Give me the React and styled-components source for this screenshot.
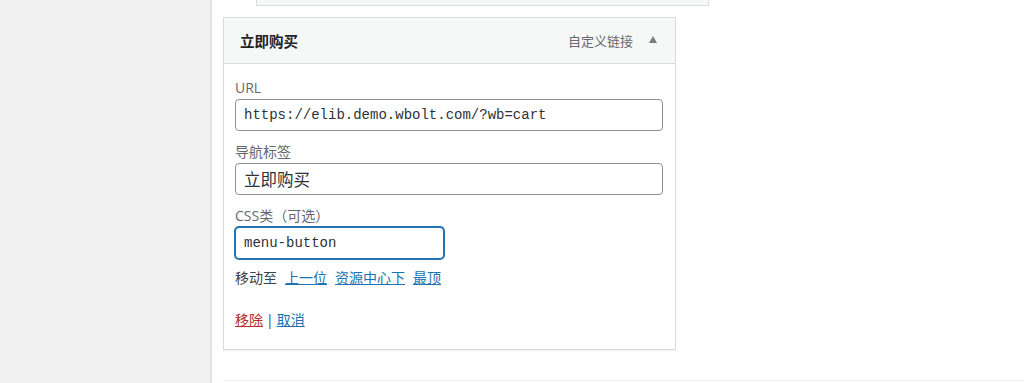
import styled, { createGlobalStyle } from "styled-components";

const GlobalStyle = createGlobalStyle`
  body {
    margin: 0;
    background: #fff;
    font-family: "Open Sans", "Noto Sans CJK SC", sans-serif;
    color: #3c434a;
  }
`;

const Page = styled.div`
  display: flex;
  width: 1024px;
  height: 383px;
  overflow: hidden;
`;

const Sidebar = styled.div`
  width: 210px;
  flex-shrink: 0;
  background: #f0f0f1;
  border-right: 2px solid #e2e2e4;
`;

const Content = styled.div`
  flex: 1;
  display: flex;
  flex-direction: column;
  padding-left: 11px;
`;

const PrevItem = styled.div`
  margin-left: 33px;
  width: 451px;
  height: 5px;
  background: #f6f7f7;
  border: 1px solid #dcdcde;
  border-top: none;
`;

const MenuItem = styled.div`
  margin-top: 11px;
  width: 453px;
  box-sizing: border-box;
  border: 1px solid #dcdcde;
  box-shadow: 0 1px 1px rgba(0, 0, 0, 0.06);
`;

const Header = styled.div`
  display: flex;
  align-items: center;
  height: 45px;
  padding: 0 18px 0 16px;
  background: #f6f7f7;
  border-bottom: 1px solid #dcdcde;
`;

const Title = styled.span`
  flex: 1;
  font-size: 14.5px;
  font-weight: 700;
  color: #1d2327;
`;

const ItemType = styled.span`
  font-size: 13px;
  color: #646970;
  margin-right: 16px;
`;

const Arrow = styled.span`
  width: 0;
  height: 0;
  border-left: 4px solid transparent;
  border-right: 4px solid transparent;
  border-bottom: 7px solid #787c82;
  margin-bottom: 2px;
`;

const Settings = styled.div`
  padding: 14px 11px 11px 11px;
  background: #fff;
  display: flex;
  flex-direction: column;
`;

const Field = styled.label`
  display: flex;
  flex-direction: column;
  margin-bottom: 11px;
`;

const Label = styled.span`
  font-size: 14px;
  line-height: 20px;
  color: #646970;
  margin-bottom: 1px;
`;

const Input = styled.input`
  box-sizing: border-box;
  width: ${(p) => p.$width || "428px"};
  height: 32px;
  padding: 0 8px;
  border: 1px solid ${(p) => (p.$focus ? "#2271b1" : "#8c8f94")};
  border-radius: 4px;
  box-shadow: ${(p) => (p.$focus ? "0 0 0 1px #2271b1" : "none")};
  font-family: ${(p) => (p.$cjk ? '"Noto Sans CJK SC", sans-serif' : '"Liberation Mono", monospace')};
  font-size: ${(p) => (p.$cjk ? "16.5px" : "14px")};
  color: #2c3338;
  outline: none;
`;

const MoveRow = styled.div`
  display: flex;
  gap: 8px;
  font-size: 14px;
  line-height: 20px;
  margin-top: -2px;
`;

const Link = styled.a`
  color: ${(p) => (p.$danger ? "#b32d2e" : "#2271b1")};
  text-decoration: underline;
  cursor: pointer;
`;

const Actions = styled.div`
  margin-top: 22px;
  font-size: 14px;
  line-height: 20px;
  margin-bottom: 8px;
`;

const Sep = styled.span`
  color: #3c434a;
  margin: 0 3px;
`;

const Divider = styled.div`
  margin-top: auto;
  margin-bottom: 2px;
  height: 1px;
  background: #f0f0f1;
`;

export default function App() {
  return (
    <>
      <GlobalStyle />
      <Page>
        <Sidebar />
        <Content>
          <PrevItem />
          <MenuItem>
            <Header>
              <Title>立即购买</Title>
              <ItemType>自定义链接</ItemType>
              <Arrow />
            </Header>
            <Settings>
              <Field>
                <Label>URL</Label>
                <Input defaultValue="https://elib.demo.wbolt.com/?wb=cart" />
              </Field>
              <Field>
                <Label>导航标签</Label>
                <Input $cjk defaultValue="立即购买" />
              </Field>
              <Field>
                <Label>CSS类（可选）</Label>
                <Input $focus $width="209px" defaultValue="menu-button" />
              </Field>
              <MoveRow>
                <span>移动至</span>
                <Link>上一位</Link>
                <Link>资源中心下</Link>
                <Link>最顶</Link>
              </MoveRow>
              <Actions>
                <Link $danger>移除</Link>
                <Sep>|</Sep>
                <Link>取消</Link>
              </Actions>
            </Settings>
          </MenuItem>
          <Divider />
        </Content>
      </Page>
    </>
  );
}
